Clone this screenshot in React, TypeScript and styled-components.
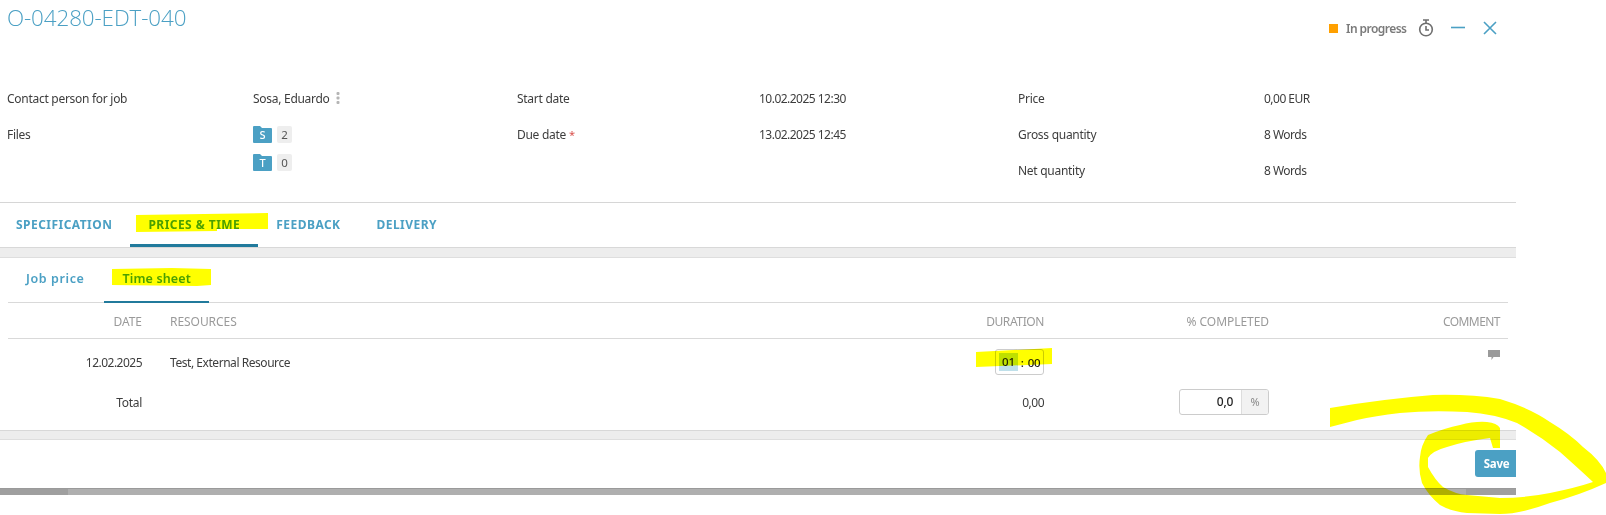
import React from "react";
import styled, { createGlobalStyle } from "styled-components";

const Global = createGlobalStyle`
  html, body { margin: 0; padding: 0; background: #fff; overflow: hidden; }
  body { font-family: "Noto Sans", "Liberation Sans", sans-serif; font-size: 12px; color: #3d3d3d; letter-spacing: -0.28px; }
`;
const Page = styled.div`position: relative; width: 1606px; height: 515px; overflow: hidden; background: #fff;`;
const Panel = styled.div`width: 1516px; display: flex; flex-direction: column;`;
const TopBar = styled.header`height: 80px; display: flex; justify-content: space-between; align-items: flex-start; padding: 0 19px 0 7px; box-sizing: border-box;`;
const Title = styled.h1`margin: 0; font-size: 22.4px; line-height: 36px; font-weight: 300; color: #4ba0c4; font-family: "Open Sans", sans-serif; letter-spacing: -0.1px;`;
const Status = styled.div`display: flex; align-items: center; height: 20px; margin-top: 18px;`;
const Square = styled.span`width: 9px; height: 9px; background: #ffa000; margin-right: 8px;`;
const StatusText = styled.span`font-weight: 600; color: #7a7a7a; margin-right: 15px; width: 57px; white-space: nowrap; letter-spacing: -0.55px;`;
const IconBtn = styled.span<{ $gap: number }>`display: flex; margin-right: ${(p) => p.$gap}px;`;
const Info = styled.section`display: grid; grid-template-columns: 246px 264px 242px 259px 246px 1fr; grid-template-rows: 36px 36px 36px; padding-left: 7px; height: 123px; box-sizing: border-box; align-items: center; border-bottom: 1px solid #d6d6d6;`;
const Text = styled.div`white-space: nowrap; display: flex; align-items: center;`;
const Num = styled(Text)`letter-spacing: -0.52px;`;
const NetLabel = styled(Text)`grid-column: 5;`;
const Kebab = styled.svg`margin-left: 6px;`;
const Req = styled.span`color: #d9534f; margin-left: 3px; font-size: 11px;`;
const FilesCell = styled.div`grid-column: 2; grid-row: 2 / span 2; align-self: start; display: flex; flex-direction: column; gap: 10px; padding-top: 9px;`;
const FileRow = styled.div`display: flex; align-items: center; gap: 5px; height: 18px;`;
const Folder = styled.span`position: relative; width: 19px; height: 18px; display: flex; align-items: center; justify-content: center; color: #fff; font-size: 11px; font-weight: 500;`;
const FolderSvg = styled.svg`position: absolute; inset: 0;`;
const FolderLetter = styled.span`position: relative; margin-top: 1px;`;
const Count = styled.span`width: 15px; height: 17px; background: #eee; border-radius: 2px; display: flex; align-items: center; justify-content: center; color: #555; font-size: 11.5px;`;
const Tabs = styled.nav`display: flex; height: 44px; box-sizing: border-box;`;
const Tab = styled.div<{ $active?: boolean }>`
  padding: 1px 18px 0; &:first-child { padding-left: 16px; padding-right: 18px; }
  display: flex; align-items: center; height: 44px; box-sizing: border-box;
  font-weight: 700; letter-spacing: 0.46px; color: #4ba0c4; font-size: 12px; white-space: nowrap;
  border-bottom: 3px solid ${(p) => (p.$active ? "#217a9c" : "transparent")};
`;
const Band = styled.div<{ $h: number }>`height: ${(p) => p.$h}px; box-sizing: border-box; background: #ededed; border-top: 1px solid #d8d8d8; border-bottom: 1px solid #dedede;`;
const Sub = styled.nav`display: flex; height: 45px; margin: 0 8px; border-bottom: 1px solid #d9d9d9; box-sizing: border-box;`;
const SubTab = styled.div<{ $active?: boolean }>`
  padding: 0 18px 2px; &:first-child { padding-right: 20px; letter-spacing: 0.6px; }
  display: flex; align-items: center; height: 45px; box-sizing: border-box;
  font-weight: 600; letter-spacing: 0.15px; font-size: 12.5px; color: #4ba0c4; white-space: nowrap;
  border-bottom: 2px solid ${(p) => (p.$active ? "#217a9c" : "transparent")};
`;
const Row = styled.div<{ $h: number; $line?: boolean; $top?: number; $bottom?: number }>`
  display: grid; grid-template-columns: 134px 500px 402px 225px 231px; height: ${(p) => p.$h}px; margin: 0 8px; align-items: center; box-sizing: border-box;
  padding-top: ${(p) => p.$top || 0}px; padding-bottom: ${(p) => p.$bottom || 0}px;
  border-bottom: ${(p) => (p.$line ? "1px solid #d9d9d9" : "none")};
`;
const Cell = styled.div<{ $right?: boolean; $pad?: number }>`
  display: flex; justify-content: ${(p) => (p.$right ? "flex-end" : "flex-start")}; padding-left: ${(p) => p.$pad || 0}px; white-space: nowrap;
`;
const NumCell = styled(Cell)`letter-spacing: -0.52px;`;
const Resource = styled(Cell)`letter-spacing: -0.45px;`;
const HeadCell = styled(Cell)<{ $ls?: number }>`color: #9a9a9a; font-size: 12px; letter-spacing: ${(p) => p.$ls ?? -0.05}px;`;
const TimeBox = styled.div`width: 49px; height: 26px; box-sizing: border-box; border: 1px solid #ccc; border-radius: 3px; background: #fff; display: flex; align-items: center; padding-left: 3px; color: #222; font-size: 11.5px; font-weight: 500; letter-spacing: -0.2px;`;
const Sel = styled.span`background: #bfe0ea; padding: 0 3px; height: 18px; line-height: 18px; margin-right: 3px;`;
const Colon = styled.span`margin-right: 4px;`;
const Pct = styled.div`display: flex; width: 90px; height: 26px; box-sizing: border-box; border: 1px solid #ccc; border-radius: 3px; overflow: hidden;`;
const PctInput = styled.div`flex: 1; text-align: right; padding-right: 8px; line-height: 24px; color: #222; font-weight: 500;`;
const PctAddon = styled.div`width: 26px; background: #f2f2f2; border-left: 1px solid #ddd; text-align: center; line-height: 24px; color: #888; font-size: 11px;`;
const CommentWrap = styled.div`display: flex; justify-content: flex-end; margin-top: -14px;`;
const Footer = styled.footer`height: 48px; display: flex; justify-content: flex-end; align-items: flex-start; padding-top: 10px; box-sizing: border-box;`;
const Save = styled.button`width: 41px; height: 27px; padding: 0 0 0 2px; border: none; background: #4ba0c4; color: #fff; font: 700 11.5px "Noto Sans", sans-serif; letter-spacing: -0.3px; border-radius: 3px 0 0 3px;`;
const Scroll = styled.div`height: 7px; background: #afafaf; display: flex; justify-content: space-between; border-top: 1px solid #9a9a9a; box-sizing: border-box;`;
const Thumb = styled.span<{ $w: number }>`width: ${(p) => p.$w}px; background: #9f9f9f;`;
const Marker = styled.svg`position: absolute; left: 0; top: 0; mix-blend-mode: multiply; pointer-events: none;`;

const FolderIcon = () => (
  <FolderSvg width="19" height="18" viewBox="0 0 19 18">
    <path d="M0 2q0-1 1-1h6l2 2h9q1 0 1 1v13q0 1-1 1H1q-1 0-1-1z" fill="#4ba0c4" />
  </FolderSvg>
);

export default function App() {
  return (
    <Page>
      <Global />
      <Panel>
        <TopBar>
          <Title>O-04280-EDT-040</Title>
          <Status>
            <Square />
            <StatusText>In progress</StatusText>
            <IconBtn $gap={17}>
              <svg width="16" height="18" viewBox="0 0 16 18" fill="none" stroke="#6f6f6f" strokeWidth="1.6">
                <circle cx="8" cy="10.5" r="6.3" />
                <path d="M5 1h6M8 1v3M8 7v4h3" />
              </svg>
            </IconBtn>
            <IconBtn $gap={18}>
              <svg width="14" height="14" viewBox="0 0 14 14"><path d="M0 6.5h14" stroke="#4ba0c4" strokeWidth="1.6" /></svg>
            </IconBtn>
            <IconBtn $gap={0}>
              <svg width="14" height="14" viewBox="0 0 14 14"><path d="M1 1l12 12M13 1L1 13" stroke="#4ba0c4" strokeWidth="1.6" /></svg>
            </IconBtn>
          </Status>
        </TopBar>
        <Info>
          <Text>Contact person for job</Text>
          <Text>
            Sosa, Eduardo
            <Kebab width="4" height="14" viewBox="0 0 4 14" fill="#b5b5b5">
              <rect x="0.5" y="1" width="3" height="3" rx="1" /><rect x="0.5" y="5.5" width="3" height="3" rx="1" /><rect x="0.5" y="10" width="3" height="3" rx="1" />
            </Kebab>
          </Text>
          <Text>Start date</Text>
          <Num>10.02.2025 12:30</Num>
          <Text>Price</Text>
          <Num>0,00 EUR</Num>
          <Text>Files</Text>
          <FilesCell>
            <FileRow><Folder><FolderIcon /><FolderLetter>S</FolderLetter></Folder><Count>2</Count></FileRow>
            <FileRow><Folder><FolderIcon /><FolderLetter>T</FolderLetter></Folder><Count>0</Count></FileRow>
          </FilesCell>
          <Text>Due date<Req>*</Req></Text>
          <Num>13.02.2025 12:45</Num>
          <Text>Gross quantity</Text>
          <Num>8 Words</Num>
          <NetLabel>Net quantity</NetLabel>
          <Num>8 Words</Num>
        </Info>
        <Tabs>
          <Tab>SPECIFICATION</Tab>
          <Tab $active>PRICES &amp; TIME</Tab>
          <Tab>FEEDBACK</Tab>
          <Tab>DELIVERY</Tab>
        </Tabs>
        <Band $h={11} />
        <Sub>
          <SubTab>Job price</SubTab>
          <SubTab $active>Time sheet</SubTab>
        </Sub>
        <Row $h={36} $line $top={2}>
          <HeadCell $right>DATE</HeadCell>
          <HeadCell $pad={28}>RESOURCES</HeadCell>
          <HeadCell $right $ls={-0.4}>DURATION</HeadCell>
          <HeadCell $right>% COMPLETED</HeadCell>
          <HeadCell $right $ls={-0.55}>COMMENT</HeadCell>
        </Row>
        <Row $h={43} $top={3}>
          <NumCell $right>12.02.2025</NumCell>
          <Resource $pad={28}>Test, External Resource</Resource>
          <Cell $right><TimeBox><Sel>01</Sel><Colon>:</Colon>00</TimeBox></Cell>
          <Cell />
          <CommentWrap>
            <svg width="12" height="10" viewBox="0 0 12 10"><path d="M0 0h12v7H5.5L3.5 10V7H0z" fill="#9a9a9a" /></svg>
          </CommentWrap>
        </Row>
        <Row $h={48} $bottom={8}>
          <Cell $right>Total</Cell>
          <Cell />
          <NumCell $right>0,00</NumCell>
          <Cell $right><Pct><PctInput>0,0</PctInput><PctAddon>%</PctAddon></Pct></Cell>
          <Cell />
        </Row>
        <Band $h={10} />
        <Footer><Save>Save</Save></Footer>
        <Scroll><Thumb $w={68} /><Thumb $w={50} /></Scroll>
      </Panel>
      <Marker width="1606" height="515" viewBox="0 0 1606 515" fill="#ffff00">
        <path d="M136 215L204 214L268 213V229L217 229V231L136 232Z" />
        <path d="M112 269L172 268L211 269V285L197 286L112 285Z" />
        <path d="M976 352L1052 348V364L976 367Z" />
        <path d="M1330 408Q1383 399 1433 395Q1470 394 1500 399Q1530 408 1550 422Q1570 434 1583 447Q1600 460 1606 473V483Q1580 495 1550 503Q1520 514 1500 514L1467 513Q1450 511 1440 505Q1428 495 1422 483Q1418 470 1420 457Q1421 445 1428 435Q1445 428 1460 425Q1475 421 1487 422Q1497 423 1500 428V448H1493L1490 438Q1465 441 1447 447Q1432 451 1428 458V467Q1435 480 1443 487Q1455 494 1467 495L1500 498Q1525 498 1550 493Q1575 488 1593 482Q1578 468 1560 452Q1540 436 1517 423Q1495 414 1467 412Q1430 410 1400 413Q1375 416 1357 420L1330 427Z" />
      </Marker>
    </Page>
  );
}
